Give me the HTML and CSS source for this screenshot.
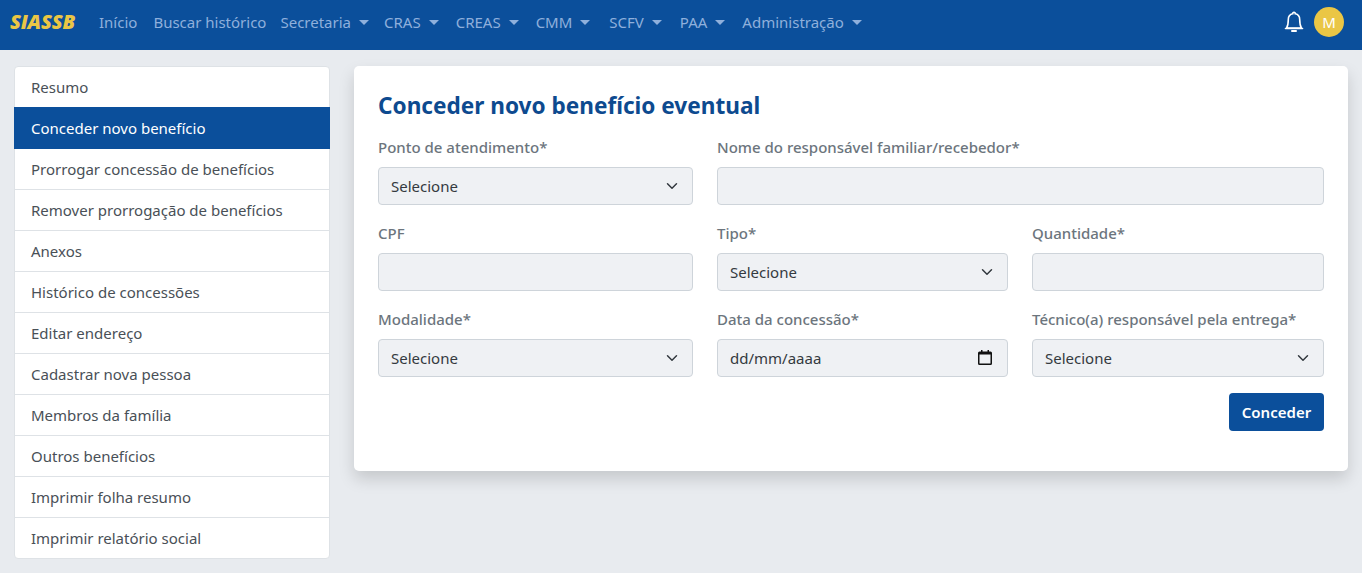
FILE: index.html
```html
<!DOCTYPE html>
<html lang="pt-BR">
<head>
<meta charset="utf-8">
<title>SIASSB</title>
<link rel="stylesheet" href="styles.css">
</head>
<body>
<nav class="navbar">
  <a class="brand">SIASSB</a>
  <ul class="nav">
    <li>Início</li>
    <li>Buscar histórico</li>
    <li class="dd">Secretaria</li>
    <li class="dd">CRAS</li>
    <li class="dd">CREAS</li>
    <li class="dd">CMM</li>
    <li class="dd">SCFV</li>
    <li class="dd">PAA</li>
    <li class="dd">Administração</li>
  </ul>
  <div class="nav-right">
    <svg class="bell" width="20" height="24" viewBox="0 0 20 24" fill="none" stroke="#fff" stroke-width="1.6"><path d="M10 2.2a1.4 1.4 0 0 1 1.3 1.6c2.8.6 4.400 3 4.400 5.700 0 3.600.4 6.400 1.800 8.600H2.500c1.400-2.200 1.800-5 1.800-8.600 0-2.700 1.600-5.100 4.400-5.700A1.400 1.400 0 0 1 10 2.200z"/><path d="M1.500 18.500h17" stroke-linecap="round"/><path d="M8 21h4" stroke-width="2" stroke-linecap="round"/></svg>
    <span class="avatar">M</span>
  </div>
</nav>
<div class="page">
  <aside class="side">
    <a class="item">Resumo</a>
    <a class="item active">Conceder novo benefício</a>
    <a class="item">Prorrogar concessão de benefícios</a>
    <a class="item">Remover prorrogação de benefícios</a>
    <a class="item">Anexos</a>
    <a class="item">Histórico de concessões</a>
    <a class="item">Editar endereço</a>
    <a class="item">Cadastrar nova pessoa</a>
    <a class="item">Membros da família</a>
    <a class="item">Outros benefícios</a>
    <a class="item">Imprimir folha resumo</a>
    <a class="item">Imprimir relatório social</a>
  </aside>
  <main class="card">
    <h1 class="title">Conceder novo benefício eventual</h1>
    <form class="grid">
      <div class="field"><label>Ponto de atendimento*</label><div class="control select">Selecione</div></div>
      <div class="field span2"><label>Nome do responsável familiar/recebedor*</label><div class="control"></div></div>
      <div class="field"><label>CPF</label><div class="control"></div></div>
      <div class="field"><label>Tipo*</label><div class="control select">Selecione</div></div>
      <div class="field"><label>Quantidade*</label><div class="control"></div></div>
      <div class="field"><label>Modalidade*</label><div class="control select">Selecione</div></div>
      <div class="field"><label>Data da concessão*</label><div class="control date">dd/mm/aaaa
        <svg class="cal" width="14" height="15" viewBox="0 0 14 15" fill="#111"><path d="M3 0h1.500v1.500h5V0H11v1.500h1.500A1.500 1.500 0 0 1 14 3v10.500a1.500 1.500 0 0 1-1.500 1.500h-11A1.500 1.500 0 0 1 0 13.500V3a1.500 1.500 0 0 1 1.500-1.500H3V0zM1.500 4.500v9h11v-9h-11z"/></svg></div></div>
      <div class="field"><label>Técnico(a) responsável pela entrega*</label><div class="control select">Selecione</div></div>
      <div class="actions"><button type="button" class="btn">Conceder</button></div>
    </form>
  </main>
</div>
</body>
</html>
```
FILE: styles.css
```css
* { box-sizing: border-box; }
html, body { margin: 0; height: 100%; }
body {
  background: #e8ebef;
  font-family: "Noto Sans", "Open Sans", "Liberation Sans", sans-serif;
  font-size: 15px;
  color: #495057;
  overflow: hidden;
}
.navbar {
  height: 50px;
  background: #0b4f9b;
  display: flex;
  align-items: center;
  padding: 0 18px 6px 10px;
}
.brand {
  color: #eac645;
  font-family: "Open Sans", sans-serif;
  font-weight: 800;
  font-style: italic;
  font-size: 20px;
  line-height: 26px;
  width: 89px;
  letter-spacing: -.2px;
}
.nav {
  display: flex;
  gap: 16px;
  list-style: none;
  margin: 0;
  padding: 0;
  color: #8fb0dc;
}
.nav li:nth-child(3) { margin-left: -2px; }
.nav li:nth-child(4) { margin-left: -1px; }
.nav li:nth-child(5),
.nav li:nth-child(6),
.nav li:nth-child(9) { margin-left: 1px; }
.nav li:nth-child(7) { margin-left: 3px; }
.nav li:nth-child(8) { margin-left: 2px; }
.dd::after {
  content: "";
  display: inline-block;
  margin-left: 8px;
  vertical-align: 3px;
  border-top: 5px solid currentColor;
  border-left: 5px solid transparent;
  border-right: 5px solid transparent;
}
.nav-right {
  margin-left: auto;
  display: flex;
  align-items: center;
  gap: 10px;
}
.bell { display: block; }
.avatar {
  width: 30px;
  height: 30px;
  border-radius: 50%;
  background: #eac645;
  color: #fff;
  display: flex;
  align-items: center;
  justify-content: center;
  font-size: 15px;
}
.page {
  display: flex;
  align-items: flex-start;
  gap: 24px;
  padding: 16px 14px;
}
.side {
  width: 316px;
  flex: none;
  background: #fff;
  border: 1px solid #dee2e6;
  border-radius: 4px;
}
.item {
  display: flex;
  align-items: center;
  height: 41px;
  padding: 0 16px;
  border-bottom: 1px solid #dee2e6;
}
.item:last-child { border-bottom: 0; height: 40px; }
.item.active {
  background: #0b4f9b;
  color: #fff;
  border-color: #0b4f9b;
  margin: -1px -1px 0;
  padding-left: 17px;
  height: 42px;
}
.card {
  width: 994px;
  height: 405px;
  background: #fff;
  border-radius: 5px;
  box-shadow: 0 8px 16px rgba(0, 0, 0, .15);
  padding: 24px;
}
.title {
  margin: 0 0 14px;
  color: #0d4a8f;
  font-size: 22.6px;
  font-weight: 700;
  line-height: 32px;
}
.grid {
  display: grid;
  grid-template-columns: 315px 291px 292px;
  column-gap: 24px;
  row-gap: 17px;
}
.field { min-width: 0; }
.span2 { grid-column: span 2; }
label {
  display: block;
  color: #6c757d;
  line-height: 22px;
  margin-bottom: 9px;
  font-weight: 500;
}
.control {
  height: 38px;
  background-color: #eff1f4;
  border: 1px solid #ced4da;
  border-radius: 4px;
  padding: 0 12px;
  display: flex;
  align-items: center;
  justify-content: space-between;
  color: #343a40;
}
.select {
  background-image: url("data:image/svg+xml,%3csvg xmlns='http://www.w3.org/2000/svg' viewBox='0 0 16 16'%3e%3cpath fill='none' stroke='%23343a40' stroke-linecap='round' stroke-linejoin='round' stroke-width='2' d='M2 5l6 6 6-6'/%3e%3c/svg%3e");
  background-repeat: no-repeat;
  background-position: right 14px center;
  background-size: 12px;
}
.date { padding-right: 15px; }
.cal { margin-top: -2px; }
.actions {
  grid-column: 1 / -1;
  display: flex;
  justify-content: flex-end;
  margin-top: -1px;
}
.btn {
  width: 95px;
  height: 38px;
  background: #0b4f9b;
  color: #fff;
  border: 0;
  border-radius: 4px;
  font: 600 15px "Noto Sans", sans-serif;
}
```
